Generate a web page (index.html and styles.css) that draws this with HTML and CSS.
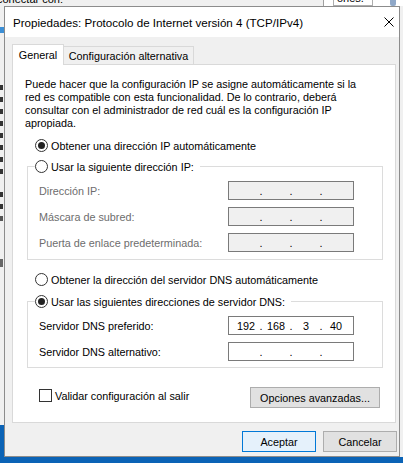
FILE: index.html
```html
<!DOCTYPE html>
<html lang="es">
<head>
<meta charset="utf-8">
<title>Propiedades: Protocolo de Internet versión 4 (TCP/IPv4)</title>
<link rel="stylesheet" href="styles.css">
</head>
<body>
<div class="bg-window">
  <div class="bg-top-text">conectar con:</div>
  <div class="bg-top-right">
    <div class="bg-box">ones.</div>
    <div class="bg-icon"></div>
  </div>
  <div class="bg-left">
    <span class="bg-icon-blue"></span>
    <span class="mk m1"></span><span class="mk"></span><span class="mk"></span><span class="mk"></span>
    <span class="mk"></span><span class="mk"></span><span class="mk"></span><span class="mk"></span>
    <span class="mk m2"></span><span class="mk"></span><span class="mk arrow"></span>
    <span class="mk m3"></span>
  </div>
</div>
<div class="desktop-left"></div>

<div class="dialog">
  <div class="titlebar">
    <span class="title">Propiedades: Protocolo de Internet versión 4 (TCP/IPv4)</span>
    <svg class="close" width="10" height="10" viewBox="0 0 10 10"><path d="M0.5 0.5L9.5 9.5M9.5 0.5L0.5 9.5" stroke="#000" stroke-width="1" fill="none"/></svg>
  </div>
  <div class="client">
    <div class="tabs">
      <div class="tab active">General</div>
      <div class="tab">Configuración alternativa</div>
    </div>
    <div class="panel">
      <p class="intro">Puede hacer que la configuración IP se asigne automáticamente si la<br>red es compatible con esta funcionalidad. De lo contrario, deberá<br>consultar con el administrador de red cuál es la configuración IP<br>apropiada.</p>

      <div class="opt opt-first"><span class="radio on"></span><span>Obtener una dirección IP automáticamente</span></div>

      <div class="group group-ip">
        <div class="legend"><span class="radio"></span><span>Usar la siguiente dirección IP:</span></div>
        <div class="row disabled"><span>Dirección IP:</span><span class="ip off"><span class="oct"></span><span class="dot">.</span><span class="oct"></span><span class="dot">.</span><span class="oct"></span><span class="dot">.</span><span class="oct"></span></span></div>
        <div class="row disabled"><span>Máscara de subred:</span><span class="ip off"><span class="oct"></span><span class="dot">.</span><span class="oct"></span><span class="dot">.</span><span class="oct"></span><span class="dot">.</span><span class="oct"></span></span></div>
        <div class="row disabled"><span>Puerta de enlace predeterminada:</span><span class="ip off"><span class="oct"></span><span class="dot">.</span><span class="oct"></span><span class="dot">.</span><span class="oct"></span><span class="dot">.</span><span class="oct"></span></span></div>
      </div>

      <div class="opt opt-dns"><span class="radio"></span><span>Obtener la dirección del servidor DNS automáticamente</span></div>

      <div class="group group-dns">
        <div class="legend"><span class="radio on"></span><span>Usar las siguientes direcciones de servidor DNS:</span></div>
        <div class="row"><span>Servidor DNS preferido:</span><span class="ip"><span class="oct">192</span><span class="dot">.</span><span class="oct">168</span><span class="dot">.</span><span class="oct">3</span><span class="dot">.</span><span class="oct">40</span></span></div>
        <div class="row"><span>Servidor DNS alternativo:</span><span class="ip"><span class="oct"></span><span class="dot">.</span><span class="oct"></span><span class="dot">.</span><span class="oct"></span><span class="dot">.</span><span class="oct"></span></span></div>
      </div>

      <div class="bottom-row">
        <div class="check-row"><span class="checkbox"></span><span>Validar configuración al salir</span></div>
        <div class="btn btn-adv">Opciones avanzadas...</div>
      </div>
    </div>
    <div class="footer">
      <div class="btn btn-default">Aceptar</div>
      <div class="btn">Cancelar</div>
    </div>
  </div>
</div>
</body>
</html>
```
FILE: styles.css
```css
* { box-sizing: border-box; }
html, body { margin: 0; padding: 0; }
body {
  width: 403px;
  height: 463px;
  overflow: hidden;
  position: relative;
  background: #0b63b6;
  font-family: "Liberation Sans", Arial, sans-serif;
  font-size: 10.8px;
  color: #000;
}

/* window behind the dialog */
.bg-window {
  position: absolute;
  left: 0;
  top: 0;
  width: 403px;
  height: 457px;
  background: #f0f0f0;
}
.bg-top-text {
  position: absolute;
  left: -3px;
  top: -7px;
  font-size: 11px;
  color: #000;
}
.bg-top-right {
  position: absolute;
  left: 323px;
  top: 0;
  width: 80px;
  height: 6px;
  background: #fff;
  border-left: 1px solid #a0a0a0;
  display: flex;
  align-items: flex-end;
}
.bg-box {
  margin-left: 9px;
  height: 12px;
  margin-bottom: 0;
  padding: 0 3px;
  border: 1px solid #adadad;
  border-top: none;
  align-self: flex-end;
  font-size: 11px;
  line-height: 9px;
  width: 40px;
  overflow: hidden;
}
.bg-icon {
  margin-left: 17px;
  width: 6px;
  height: 6px;
  background: #8fa8c8;
  border-radius: 0 0 2px 2px;
}
.bg-left {
  position: absolute;
  left: 0;
  top: 6px;
  width: 4px;
  height: 419px;
  display: flex;
  flex-direction: column;
  align-items: flex-start;
}
.bg-icon-blue {
  margin-top: 21px;
  width: 4px;
  height: 6px;
  background: #3c8fd6;
}
.mk {
  width: 3px;
  height: 5px;
  margin-top: 7px;
  background: #333;
}
.mk.m1 { margin-top: 52px; }
.mk.m2 { margin-top: 18px; }
.mk.arrow { background: #555; }
.mk.m3 { margin-top: 38px; height: 8px; background: #666; }
.desktop-left {
  position: absolute;
  left: 0;
  top: 425px;
  width: 4px;
  height: 38px;
  background: #0b63b6;
}

/* dialog */
.dialog {
  position: absolute;
  left: 4px;
  top: 6px;
  width: 396px;
  height: 451px;
  border: 1px solid #8c8c8c;
  background: #f0f0f0;
  display: flex;
  flex-direction: column;
}
.titlebar {
  height: 30px;
  flex: none;
  background: #fff;
  display: flex;
  align-items: center;
  padding-left: 8px;
}
.title {
  font-size: 11.6px;
  padding-top: 1px;
}
.close {
  margin-left: auto;
  margin-right: 5px;
  display: block;
}
.client {
  flex: 1;
  padding: 7px 3px 0 7px;
  display: flex;
  flex-direction: column;
}
.tabs {
  display: flex;
  align-items: flex-end;
}
.tab {
  height: 18px;
  width: 130px;
  border: 1px solid #d9d9d9;
  border-left: none;
  border-bottom: none;
  background: #f0f0f0;
  display: flex;
  align-items: center;
  justify-content: center;
}
.tab.active {
  width: 52px;
  height: 21px;
  margin-bottom: -1px;
  border-left: 1px solid #d9d9d9;
  background: #fff;
  position: relative;
  z-index: 1;
  padding-bottom: 1px;
}
.panel {
  height: 359px;
  border: 1px solid #d9d9d9;
  background: #fff;
  padding: 13px 11px 0 12px;
}
.intro {
  margin: 0;
  line-height: 13px;
  white-space: nowrap;
}
.opt {
  display: flex;
  align-items: center;
  height: 15px;
  margin-left: 10px;
  white-space: nowrap;
}
.opt-first { margin-top: 8px; }
.opt-dns { margin-top: 12px; }
.radio {
  width: 13px;
  height: 13px;
  flex: none;
  border: 1px solid #333;
  border-radius: 50%;
  background: #fff;
  margin-right: 3px;
  display: flex;
  align-items: center;
  justify-content: center;
}
.radio.on::after {
  content: "";
  width: 7px;
  height: 7px;
  border-radius: 50%;
  background: #222;
}
.group {
  width: 356px;
  margin-left: 2px;
  border: 1px solid #dcdcdc;
  padding: 0 28px 7px 11px;
}
.group-ip { margin-top: 13px; }
.group-dns { margin-top: 14px; padding-bottom: 6px; }
.legend {
  display: flex;
  align-items: center;
  width: fit-content;
  height: 15px;
  margin: -8px 0 0 -4px;
  padding-right: 6px;
  background: #fff;
  white-space: nowrap;
}
.row {
  display: flex;
  align-items: center;
  justify-content: space-between;
  height: 19px;
  margin-top: 7px;
}
.row.disabled { color: #6d6d6d; }
.ip {
  width: 126px;
  height: 19px;
  border: 1px solid #7a7a7a;
  background: #fff;
  display: flex;
  align-items: center;
  padding-left: 5px;
  color: #000;
}
.ip.off { background: #f0f0f0; }
.oct {
  width: 24px;
  text-align: center;
}
.dot {
  width: 6px;
  text-align: center;
}
.bottom-row {
  display: flex;
  align-items: flex-start;
  margin-top: 19px;
}
.check-row {
  display: flex;
  align-items: center;
  height: 15px;
  margin-top: 1px;
  margin-left: 14px;
}
.checkbox {
  width: 13px;
  height: 13px;
  border: 1px solid #333;
  background: #fff;
  margin-right: 3px;
}
.btn {
  width: 74px;
  height: 21px;
  border: 1px solid #adadad;
  background: #e1e1e1;
  display: flex;
  align-items: center;
  justify-content: center;
  white-space: nowrap;
}
.btn-adv {
  width: 130px;
  margin-left: auto;
  margin-right: 4px;
}
.btn-default {
  border-color: #0078d7;
  background: #e5f1fb;
}
.footer {
  display: flex;
  justify-content: flex-end;
  gap: 7px;
  margin-top: 8px;
  margin-right: -1px;
}
```
